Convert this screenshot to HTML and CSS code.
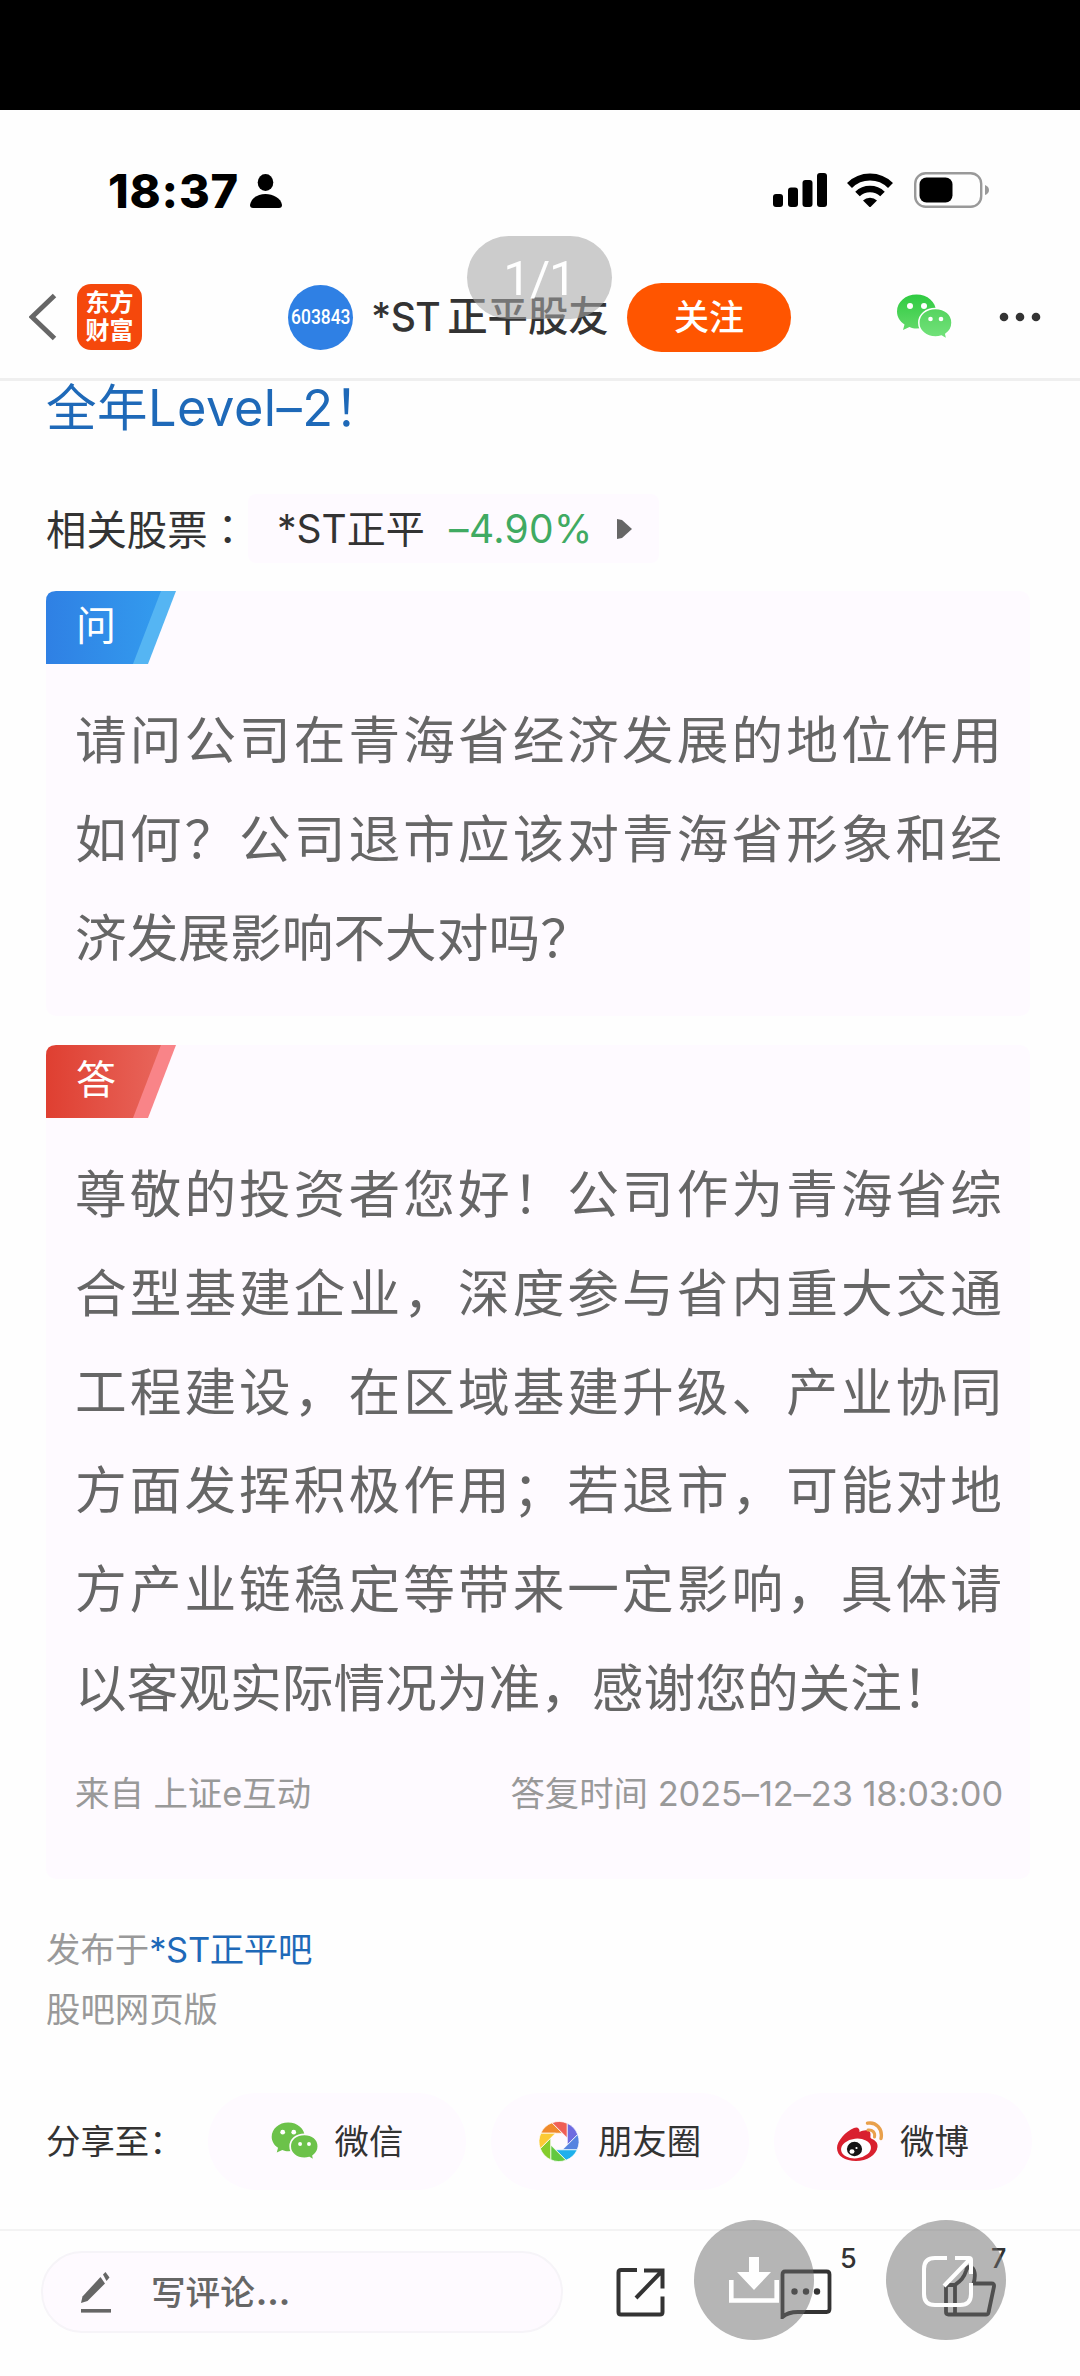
FILE: index.html
```html
<!DOCTYPE html>
<html lang="zh-CN">

	<head>
		<meta charset="UTF-8">
		<title>*ST正平股友</title>
		<link rel="stylesheet" href="styles.css">
	</head>

	<body>
		<div class="black"></div>
		<!--状态栏-->
		<div class="status">
			<span class="time">18:37</span>
			<svg class="person" width="32" height="34" viewBox="0 0 32 34">
				<ellipse cx="15.500" cy="8.500" rx="7.800" ry="8.500" />
				<path d="M3 34Q0 34 0 31C1 24 8 20 15.500 20S31 24 32 31Q32 34 29 34Z" />
			</svg>
			<svg class="signal" width="54" height="34" viewBox="0 0 54 34">
				<rect x="0" y="21" width="10" height="13" rx="3" />
				<rect x="15" y="14.500" width="10" height="19.500" rx="3" />
				<rect x="29.500" y="7" width="10" height="27" rx="3" />
				<rect x="44" y="0" width="10" height="34" rx="3" />
			</svg>
			<svg class="wifi" width="46" height="34" viewBox="0 0 46 34">
				<path d="M2.500 12.500A29 29 0 0 1 43.500 12.500" fill="none" stroke="#000" stroke-width="7" />
				<path d="M10.500 21A18 18 0 0 1 35.500 21" fill="none" stroke="#000" stroke-width="6.500" />
				<path d="M16 27.500A10 10 0 0 1 30 27.500L23 34.500Z" />
			</svg>
			<svg class="battery" width="76" height="36" viewBox="0 0 76 36">
				<rect x="1.200" y="1.200" width="66" height="33.600" rx="10.500" fill="none" stroke="#999" stroke-width="2.400" />
				<rect x="5.500" y="5.500" width="33" height="25" rx="7" />
				<path d="M71 13Q75 14.500 75 18T71 23Z" fill="#999" />
			</svg>
		</div>
		<!--导航-->
		<nav class="nav">
			<svg class="back" width="28" height="48" viewBox="0 0 28 48">
				<path d="M25.500 2.500L3 24L25.500 45.500" fill="none" stroke="#666" stroke-width="5" />
			</svg>
			<div class="logo"><span>东方</span><span>财富</span></div>
			<div class="avatar"><span>603843</span></div>
			<h1 class="name"><span class="st">*ST</span>正平股友</h1>
			<div class="follow">关注</div>
			<svg class="wechat" width="55" height="46" viewBox="0 0 55 46">
				<defs>
					<linearGradient id="g1" x1="0" y1="0" x2="0" y2="1">
						<stop offset="0" stop-color="#2fcb41" />
						<stop offset="1" stop-color="#62d969" />
					</linearGradient>
					<linearGradient id="g2" x1="0" y1="0" x2="0" y2="1">
						<stop offset="0" stop-color="#55d45f" />
						<stop offset="1" stop-color="#74e37c" />
					</linearGradient>
				</defs>
				<path fill="url(#g1)" d="M19.500 0.500C8.500 0.500 0 8 0 17.500C0 23 3 27.500 7.500 30.500L6 36L12.500 33C15 34 17 34.500 19.500 34.500C30.500 34.500 39 27 39 17.500S30.500 0.500 19.500 0.500Z" />
				<path fill="url(#g2)" stroke="#fff" stroke-width="1.500" d="M38.500 14.500C29 14.500 21.800 20.500 21.800 28.700S29 43 38.500 43C40.500 43 42.500 42.700 44.500 42L50 45.500L48.800 40C52.500 37.500 55 33.500 55 28.700C55 20.500 48 14.500 38.500 14.500Z" />
				<g fill="#fff">
					<circle cx="13" cy="12" r="3" />
					<circle cx="27" cy="12" r="3" />
					<circle cx="33.500" cy="25" r="2.300" />
					<circle cx="44" cy="25" r="2.300" />
				</g>
			</svg>
			<svg class="more" width="42" height="10" viewBox="0 0 42 10">
				<circle cx="5" cy="5" r="4.300" />
				<circle cx="21" cy="5" r="4.300" />
				<circle cx="37" cy="5" r="4.300" />
			</svg>
		</nav>

		<section class="content">
			<p class="link"><span>全年</span>Level–2！</p>
			<div class="related">
				<span>相关股票<i class="colon" lang="zh-TW">：</i></span>
				<div class="chip">
					<span class="chip_name">*ST正平</span>
					<span class="down">–4.90%</span>
					<svg width="15" height="20" viewBox="0 0 15 20">
						<path d="M0 0L5 1L15 10L5 19L0 20Z" fill="#666" />
					</svg>
				</div>
			</div>

			<div class="card ask">
				<div class="tag">
					<svg width="130" height="73" viewBox="0 0 130 73">
						<defs>
							<linearGradient id="blue">
								<stop offset="0" stop-color="#2f80e4" />
								<stop offset="1" stop-color="#339bee" />
							</linearGradient>
						</defs>
						<path d="M60 0H130L102 73H60Z" fill="#55b5f3" />
						<path d="M10 0H115L87 73H0V10Q0 0 10 0Z" fill="url(#blue)" />
					</svg>
					<span>问</span>
				</div>
				<p class="text">请问公司在青海省经济发展的地位作用如何？公司退市应该对青海省形象和经济发展影响不大对吗？</p>
			</div>

			<div class="card answer">
				<div class="tag">
					<svg width="130" height="73" viewBox="0 0 130 73">
						<defs>
							<linearGradient id="red">
								<stop offset="0" stop-color="#df3f31" />
								<stop offset="1" stop-color="#e8655b" />
							</linearGradient>
						</defs>
						<path d="M60 0H130L102 73H60Z" fill="#f98488" />
						<path d="M10 0H115L87 73H0V10Q0 0 10 0Z" fill="url(#red)" />
					</svg>
					<span>答</span>
				</div>
				<p class="text">尊敬的投资者您好！公司作为青海省综合型基建企业，深度参与省内重大交通工程建设，在区域基建升级、产业协同方面发挥积极作用；若退市，可能对地方产业链稳定等带来一定影响，具体请以客观实际情况为准，感谢您的关注！</p>
				<div class="meta">
					<span>来自 上证e互动</span>
					<span>答复时间 <em class="date">2025–12–23 18:03:00</em></span>
				</div>
			</div>

			<p class="from">发布于<a>*ST正平吧</a></p>
			<p class="from">股吧网页版</p>

			<!--分享-->
			<div class="share">
				<span class="share_title">分享至：</span>
				<div class="share_item">
					<svg width="48" height="39" viewBox="0 0 55 46">
						<path fill="#6cc24a" d="M19.500 0.500C8.500 0.500 0 8 0 17.500C0 23 3 27.500 7.500 30.500L6 36L12.500 33C15 34 17 34.500 19.500 34.500C30.500 34.500 39 27 39 17.500S30.500 0.500 19.500 0.500Z" />
						<path fill="#6cc24a" stroke="#fefaff" stroke-width="2" d="M38.500 14.500C29 14.500 21.800 20.500 21.800 28.700S29 43 38.500 43C40.500 43 42.500 42.700 44.500 42L50 45.500L48.800 40C52.500 37.500 55 33.500 55 28.700C55 20.500 48 14.500 38.500 14.500Z" />
						<g fill="#fff">
							<circle cx="13" cy="12" r="2.800" />
							<circle cx="26" cy="12" r="2.800" />
							<circle cx="33.500" cy="26" r="2.300" />
							<circle cx="44" cy="26" r="2.300" />
						</g>
					</svg>
					<span>微信</span>
				</div>
				<div class="share_item">
					<svg class="moments" width="40" height="41" viewBox="-20 -20 40 40">
						<defs>
							<path id="blade" d="M3.400 -8.300L-18.200 -8.300A20 20 0 0 1 -7 -18.700Z" stroke="#fff" stroke-width="0.700" />
						</defs>
						<use href="#blade" fill="#f08a2c" />
						<use href="#blade" fill="#ef5f56" transform="rotate(45)" />
						<use href="#blade" fill="#6f6be0" transform="rotate(90)" />
						<use href="#blade" fill="#5583e0" transform="rotate(135)" />
						<use href="#blade" fill="#1fb0ec" transform="rotate(180)" />
						<use href="#blade" fill="#62c840" transform="rotate(225)" />
						<use href="#blade" fill="#84cc2c" transform="rotate(270)" />
						<use href="#blade" fill="#fbca34" transform="rotate(315)" />
					</svg>
					<span>朋友圈</span>
				</div>
				<div class="share_item">
					<svg class="weibo" width="47" height="41" viewBox="0 0 47 41">
						<path fill="#d9202f" d="M17 7C20 5.500 23 7 22.500 11C27 8.500 34 8 33.500 14C33.400 16 33 17 35 18C38.500 19.500 41 22 40.500 26C39.500 34 30 40 19 40C8 40 0 35 0 27C0 20 9 10 17 7Z" />
						<ellipse cx="19" cy="27.500" rx="15" ry="9.800" fill="#fff" transform="rotate(-6 19 27.500)" />
						<ellipse cx="17.500" cy="28" rx="7.600" ry="7.200" fill="#151515" />
						<ellipse cx="15" cy="30.500" rx="2.500" ry="2.200" fill="#fff" />
						<circle cx="19.500" cy="27" r="1.100" fill="#fff" />
						<path d="M30.500 2.200C39 0.500 46 8 44 17.500" fill="none" stroke="#e9a04c" stroke-width="3.400" stroke-linecap="round" />
						<path d="M31 9C35.500 8.500 38.500 11.500 37.500 16" fill="none" stroke="#e9a04c" stroke-width="3" stroke-linecap="round" />
					</svg>
					<span>微博</span>
				</div>
			</div>
		</section>

		<!--底部-->
		<footer class="footer">
			<div class="input">
				<svg width="30" height="41" viewBox="0 0 30 41" fill="#666">
					<path d="M22 2.500L24.500 0L28.500 5.500L25.500 9Z" />
					<path d="M19.500 5L24 11.500L6.500 29L0 31L1.500 24.500Z" />
					<rect x="0" y="37" width="30" height="3.600" />
				</svg>
				<span>写评论<b>...</b></span>
			</div>
			<svg class="icon_open" width="50" height="50" viewBox="0 0 50 50" fill="none" stroke="#333" stroke-width="4">
				<path d="M21 3H5Q2.500 3 2.500 5.500V45Q2.500 47.500 5 47.500H44Q46.500 47.500 46.500 45V29.500" />
				<path d="M28 3.500H46.500V21.500M46 4L20 31" />
			</svg>
			<svg class="icon_comment" width="52" height="50" viewBox="0 0 52 50" fill="none" stroke="#333" stroke-width="3.800">
				<path d="M5 2.500H46.500Q49.500 2.500 49.500 5.500V40Q49.500 43 46.500 43H18Q8 43 2.500 48V5.500Q2.500 2.500 5 2.500Z" />
				<g fill="#333" stroke="none">
					<circle cx="14.500" cy="22.500" r="3.200" />
					<circle cx="26" cy="22.500" r="3.200" />
					<circle cx="37" cy="22.500" r="3.200" />
				</g>
			</svg>
			<span class="num">5</span>
			<svg class="icon_like" width="52" height="52" viewBox="0 0 52 52" fill="none" stroke="#333" stroke-width="3.800" stroke-linejoin="round">
				<path d="M11 20H4.500Q2 20 2 22.500V47Q2 49.500 4.500 49.500H42Q44 49.500 44.500 47.500L50 21.500Q50.500 18.500 47.500 18.500H29.500C32 11 31 3 26.500 2Q23 1.500 22 6C20 13 16 16 11 20V49" />
			</svg>
			<span class="num">7</span>
		</footer>

		<!--看图浮层-->
		<div class="page_num">1/1</div>
		<div class="round download">
			<svg width="50" height="46" viewBox="0 0 50 46">
				<path d="M20 0H30V15H42L25 33L8 15H20Z" fill="#fff" />
				<path d="M2.300 23V43.500H47.700V23" fill="none" stroke="#fff" stroke-width="4.600" />
			</svg>
		</div>
		<div class="round forward">
			<svg width="52" height="52" viewBox="0 0 52 52" fill="none" stroke="#fff" stroke-width="4">
				<path d="M25 2H13Q2 2 2 13V38Q2 49 13 49H38Q49 49 49 38V27" />
				<path d="M33 2H47Q49 2 49 4V18M48 3L22 30" />
			</svg>
		</div>
	</body>

</html>
```
FILE: styles.css
```css
body {
	margin: 0;
	width: 1080px;
	height: 2376px;
	overflow: hidden;
	position: relative;
	background: #fefefe;
	color: #333;
	font-family: Inter, "Noto Sans CJK SC", sans-serif;
}

p, h1 {
	margin: 0;
	font-weight: normal;
}

svg {
	display: block;
	flex: none;
}

.black {
	height: 110px;
	background: #000;
}

/*状态栏*/
.status {
	height: 160px;
	box-sizing: border-box;
	padding: 62px 90px 0 108px;
	display: flex;
	align-items: flex-start;
}

.time {
	width: 142px;
	color: #000;
	font-size: 47px;
	line-height: 37px;
	font-weight: 800;
	letter-spacing: 0.8px;
}

.person {
	margin-top: 2px;
}

.signal {
	margin: 1px 20px 0 auto;
}

.wifi {
	margin: 1px 21px 0 0;
}

/*导航*/
.nav {
	height: 111px;
	box-sizing: border-box;
	padding: 0 39px 14px 29px;
	border-bottom: 3px solid #efefef;
	display: flex;
	align-items: center;
}

.logo {
	width: 65px;
	height: 66px;
	margin-left: 20px;
	border-radius: 14px;
	background: #f5480c;
	color: #fff;
	font-size: 24px;
	line-height: 28px;
	font-weight: 700;
	display: flex;
	flex-direction: column;
	align-items: center;
	justify-content: center;
}

.avatar {
	width: 65px;
	height: 65px;
	margin-left: 146px;
	border-radius: 50%;
	background: #2f80e4;
	color: #fff;
	display: flex;
	align-items: center;
	justify-content: center;
	font: 500 21px Roboto, sans-serif;
}

.avatar span {
	transform: scaleX(.83);
}

.name {
	width: 256px;
	margin-left: 18px;
	font-size: 40.4px;
	font-weight: 500;
	line-height: 60px;
	white-space: nowrap;
}

.st {
	margin-right: 7px;
	font-size: 39px;
	letter-spacing: -0.6px;
}

.follow {
	width: 164px;
	height: 69px;
	border-radius: 35px;
	background: #ff5500;
	color: #fff;
	font-size: 35px;
	line-height: 69px;
	font-weight: 500;
	text-align: center;
}

.wechat {
	margin-left: auto;
}

.more {
	margin-left: 47px;
	fill: #333;
}

/*正文*/
.content {
	padding: 0 48px 0 46px;
}

.link {
	color: #1e69b8;
	font-size: 50.5px;
	line-height: 54px;
	letter-spacing: 0.5px;
}

.related {
	margin-top: 59px;
	height: 69px;
	display: flex;
	align-items: center;
	font-size: 40.4px;
	line-height: 69px;
}

.colon {
	font-family: "Noto Sans CJK TC", sans-serif;
	font-style: normal;
}

.chip {
	width: 411px;
	height: 69px;
	box-sizing: border-box;
	padding-left: 29px;
	border-radius: 8px;
	background: #fefaff;
	display: flex;
	align-items: center;
	font-size: 39px;
}

.chip_name {
	width: 172px;
}

.down {
	width: 168px;
	color: #40aa62;
	letter-spacing: 0.4px;
}

.card {
	margin-top: 29px;
	width: 984px;
	border-radius: 10px;
	background: #fefaff;
}

.ask {
	margin-top: 28px;
	height: 425px;
}

.answer {
	height: 834px;
}

.tag {
	position: relative;
	height: 73px;
}

.tag span {
	position: absolute;
	left: 30px;
	top: 0;
	color: #fff;
	font-size: 40px;
	line-height: 70px;
}

.text {
	width: 927px;
	padding: 27px 0 0 29px;
	color: #666;
	font-size: 51.700px;
	line-height: 98.8px;
	text-align: justify;
}

.meta {
	margin: 28px 27px 0 29px;
	display: flex;
	justify-content: space-between;
	color: #999;
	font-size: 34.4px;
	line-height: 56px;
}

.date {
	font-style: normal;
	letter-spacing: -0.1px;
}

.from {
	color: #999;
	font-size: 34.4px;
	line-height: 60px;
}

.answer + .from {
	margin-top: 41px;
}

.from a {
	color: #1e69b8;
	letter-spacing: -0.3px;
}

.share {
	margin-top: 53px;
	display: flex;
	align-items: center;
	font-size: 34.4px;
	line-height: 94px;
}

.share_title {
	width: 162px;
	flex: none;
	white-space: nowrap;
}

.share_item {
	width: 258px;
	height: 97px;
	margin-right: 25px;
	flex: none;
	border-radius: 49px;
	background: #fefaff;
	display: flex;
	align-items: center;
	justify-content: center;
	gap: 16px;
}

.moments {
	margin-right: 3px;
}

/*底部*/
.footer {
	margin-top: 39px;
	height: 144px;
	box-sizing: border-box;
	padding: 20px 0 0 41px;
	border-top: 2px solid #f3f3f3;
	display: flex;
	align-items: flex-start;
}

.input {
	width: 522px;
	height: 82px;
	box-sizing: border-box;
	padding-left: 38px;
	border: 2px solid #f6f4f8;
	border-radius: 41px;
	background: #fefaff;
	color: #666;
	font-size: 34.6px;
	line-height: 78px;
	font-weight: 500;
	display: flex;
	align-items: center;
}

.input span {
	margin-left: 40px;
}

.input b {
	margin-left: 1px;
}

.icon_open {
	margin: 16px 0 0 53px;
}

.icon_comment {
	margin: 18px 0 0 114px;
}

.num {
	width: 20px;
	margin: -3px 0 0 8px;
	font-size: 27px;
	line-height: 20px;
	font-weight: 500;
	padding-top: 1px;
}

.icon_like {
	margin: 14px 0 0 84px;
}

.icon_like + .num {
	margin-left: -5px;
}

/*浮层*/
.page_num {
	position: absolute;
	left: 467px;
	top: 236px;
	width: 145px;
	height: 83px;
	border-radius: 42px;
	background: rgba(167, 167, 167, .58);
	color: #fff;
	font: 49px/86px Roboto, sans-serif;
	letter-spacing: -1px;
	text-align: center;
}

.round {
	position: absolute;
	top: 2220px;
	width: 120px;
	height: 120px;
	border-radius: 50%;
	background: rgba(107, 107, 107, .5);
}

.download {
	left: 694px;
}

.forward {
	left: 886px;
}

.download svg {
	margin: 37px 0 0 35px;
}

.forward svg {
	margin: 36px 0 0 36px;
}
```
